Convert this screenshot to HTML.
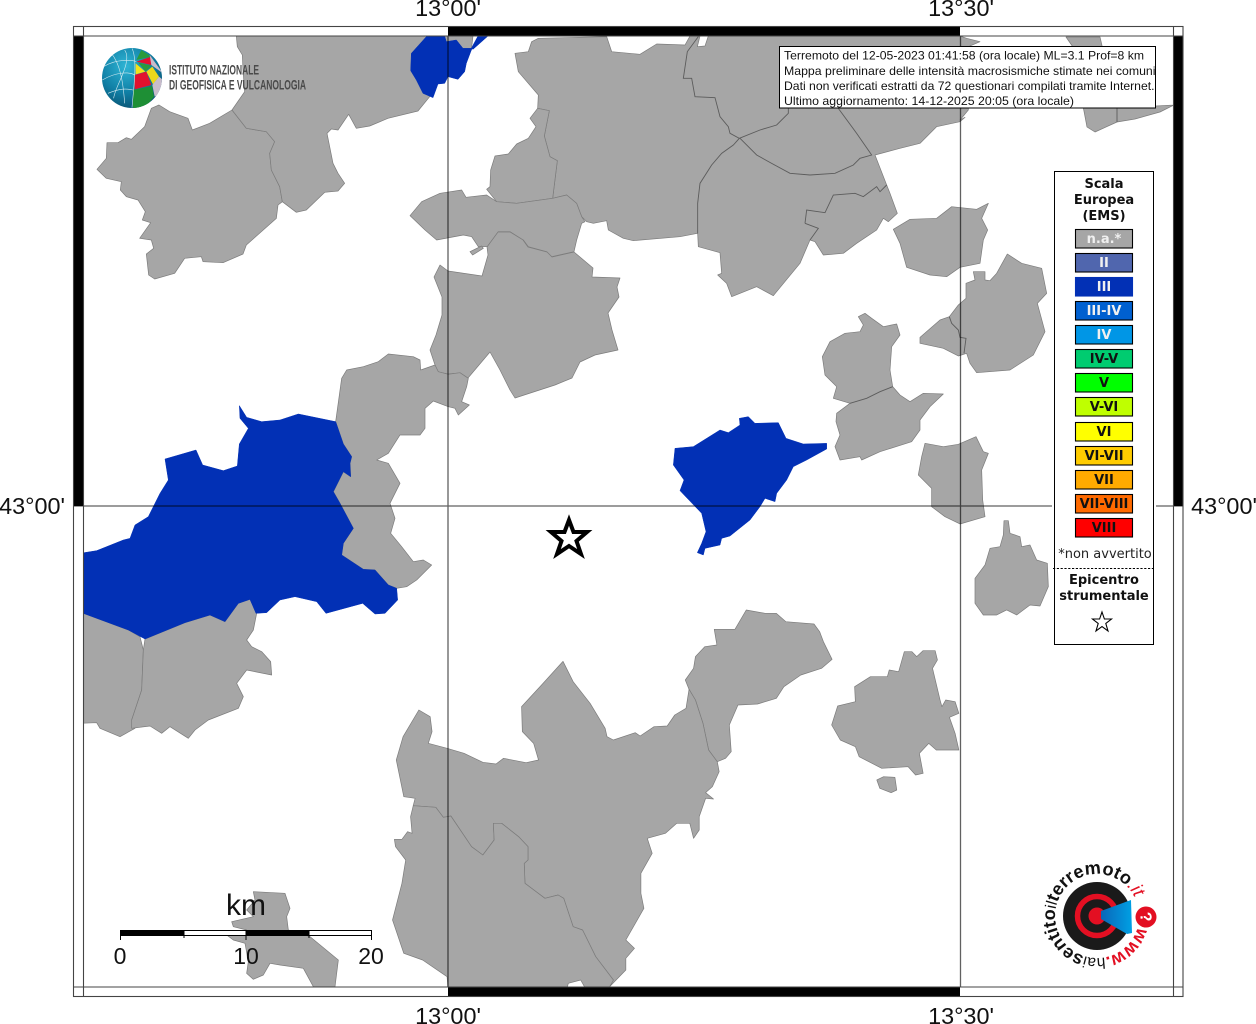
<!DOCTYPE html>
<html><head><meta charset="utf-8"><title>Mappa intensità macrosismiche</title>
<style>
html,body{margin:0;padding:0;background:#fff;width:1256px;height:1024px;overflow:hidden}
svg{display:block;font-family:"Liberation Sans",sans-serif}
.g polygon{fill:#a6a6a6;stroke:#7c7c7c;stroke-width:.7;vector-effect:non-scaling-stroke;stroke-linejoin:round}
.b polygon{fill:#0230b5;stroke:#0230b5;stroke-width:.5;vector-effect:non-scaling-stroke}
.g polyline{fill:none;stroke:#5c5c5c;stroke-width:.9;vector-effect:non-scaling-stroke}
.ax{font-size:23.4px;fill:#111;text-anchor:middle}
.lg{font-family:"DejaVu Sans",sans-serif;font-size:13px;text-anchor:middle}
.bt{font-family:"DejaVu Sans",sans-serif;font-size:13px;font-weight:bold;text-anchor:middle}
.sb{font-size:23px;fill:#111;text-anchor:middle}
.hd{font-size:12px;fill:#111}
</style></head><body>
<svg width="1256" height="1024" viewBox="0 0 1256 1024" xmlns="http://www.w3.org/2000/svg">
<defs>
<clipPath id="m"><rect x="83" y="36" width="1090" height="951"/></clipPath>
<clipPath id="globe"><circle cx="132" cy="78" r="30"/></clipPath>
<clipPath id="hbox"><rect x="780" y="47" width="375" height="61"/></clipPath>
<radialGradient id="gb" cx=".4" cy=".3" r=".8"><stop offset="0" stop-color="#2fb5d5"/><stop offset=".55" stop-color="#107fa5"/><stop offset="1" stop-color="#094a68"/></radialGradient>
<linearGradient id="cone" x1="0" x2="1" y1="0" y2="0"><stop offset="0" stop-color="#0a66b8"/><stop offset="1" stop-color="#00a0e4"/></linearGradient>
</defs>

<g clip-path="url(#m)">
<g class="g">
<g transform="translate(83,30) scale(.33333)">
<polygon points="228,225 205,235 185,290 145,328 130,323 105,338 72,338 70,385 42,418 70,445 115,455 112,480 130,500 165,510 187,545 178,570 203,578 170,625 205,630 212,655 190,672 197,735 215,747 275,730 305,685 355,680 360,695 420,698 480,672 490,645 580,565 585,525 598,515 590,470 565,420 560,370 575,335 550,305 490,295 447,240 380,280 328,300 315,265 260,245"/>
<polygon points="460,18 463,50 478,75 480,120 485,185 447,240 490,295 550,305 575,335 560,370 565,420 590,470 598,515 640,547 670,540 725,487 765,483 785,460 765,430 750,400 740,350 732,310 745,297 765,300 797,253 820,295 860,288 915,265 1005,243 1040,200 1070,150 1165,60 1170,18"/>
</g>
<g transform="translate(400,30) scale(.33333)">
<polygon points="345,70 385,65 395,35 415,25 620,20 635,65 720,73 770,42 855,45 870,18 900,18 892,50 915,48 925,18 1680,18 1700,25 1740,35 1705,50 1705,240 1680,270 1695,262 1680,275 1610,290 1560,340 1500,355 1425,375 1460,465 1470,490 1492,550 1465,575 1450,565 1430,600 1370,640 1330,670 1270,675 1245,635 1230,630 1200,700 1120,797 1070,770 995,800 980,760 953,735 965,730 960,668 895,650 893,610 840,620 700,632 670,625 625,600 620,572 580,580 560,575 545,560 530,520 500,495 458,505 472,392 450,380 433,318 448,242 413,235 415,195 355,125"/>
<polygon points="260,478 270,470 272,420 285,378 325,372 350,342 385,325 408,290 390,265 413,235 448,242 433,318 450,380 472,392 458,505 350,520 290,515"/>
<polygon points="30,557 65,515 120,490 185,480 198,502 260,495 290,515 350,520 458,505 500,495 530,520 545,560 555,575 545,580 530,630 522,665 455,680 440,665 385,650 370,630 330,605 295,605 262,650 235,650 215,620 190,615 110,630 75,600"/>
<polygon points="210,665 245,648 250,655 218,675"/>
<polyline points="895,20 862,65 850,145 875,145 885,200 945,203 960,260 985,290 990,310 1018,325 1000,345 965,370 935,405 900,460 893,520 893,610"/>
<polyline points="1018,325 1080,300 1130,285 1165,250 1165,235"/>
<polyline points="1020,325 1070,375 1115,400 1170,430 1230,435 1305,430 1360,405 1380,385 1415,375 1370,310 1315,235"/>
<polyline points="1215,580 1220,540 1275,548 1300,495 1365,490 1390,500 1430,470 1440,485 1460,465"/>
<polyline points="1215,580 1255,595 1230,630"/>
</g>
<polygon points="440,265 448,271 482,276 488,255 487,247 498,232 510,232 523,240 528,247 547,252 552,257 574,252 593,268 592,277 620,278 617,287 619,297 608,313 612,330 618,350 595,355 580,362 572,378 555,385 515,398 510,390 500,370 490,352 468,378 460,373 448,374 438,372 435,365 430,350 436,335 442,315 442,297 434,277"/>
<g transform="translate(80,340) scale(.33333)">
<polygon points="1065,75 1075,95 1105,103 1140,98 1165,115 1160,140 1145,185 1168,195 1135,225 1125,205 1105,200 1060,183 1035,205 1035,265 1020,285 960,285 925,340 890,360 925,370 960,430 930,490 945,535 932,580 965,620 1000,665 1030,660 1055,675 1010,720 980,740 950,745 925,735 885,690 850,688 785,645 790,610 820,565 780,490 760,455 790,395 812,410 810,370 815,350 790,312 767,245 785,115 800,90 850,80 895,65 925,42 1000,50 1020,60 1022,90"/>
<polygon points="10,820 145,870 180,890 190,930 185,1050 155,1140 165,1165 120,1190 60,1165 50,1148 0,1150 0,820"/>
<polygon points="195,897 315,848 390,825 435,845 475,790 510,778 530,820 520,870 500,900 515,920 545,935 572,965 575,1005 500,990 470,1030 490,1070 475,1105 385,1140 345,1170 325,1195 270,1160 245,1180 210,1158 155,1165 155,1140 185,1050 190,930"/>
</g>
<g transform="translate(690,30) scale(.33333)">
<polygon points="610,598 660,568 740,565 785,530 860,538 895,520 875,565 893,600 880,630 870,700 810,712 770,740 720,735 650,712 630,640"/>
</g>
<g transform="translate(660,250) scale(.33333)">
<polygon points="1042,12 1085,40 1145,55 1160,130 1132,160 1155,245 1120,315 1050,360 950,368 930,340 920,310 895,318 850,295 780,280 780,262 840,210 868,200 895,165 918,145 918,100 945,90 940,65 975,65 975,90 990,92 1010,70"/>
<polyline points="868,200 875,220 895,240 900,262 918,265 912,310"/>
<polygon points="595,200 615,190 635,205 670,230 710,222 720,255 695,290 690,360 698,410 720,435 750,455 790,430 850,432 810,470 780,510 780,540 755,575 660,605 605,630 600,620 540,630 525,590 540,555 528,515 530,490 570,460 520,445 530,410 495,375 487,320 510,275 555,250 600,245 610,225"/>
<polyline points="570,460 620,445 660,425 698,410"/>
<polygon points="795,580 850,590 895,583 948,560 970,605 985,610 965,660 968,750 975,800 900,822 855,800 815,770 815,715 775,675 785,620"/>
<polygon points="1032,812 1045,812 1050,850 1080,860 1085,890 1110,885 1130,930 1162,940 1165,1010 1140,1068 1110,1065 1070,1095 1040,1080 1010,1095 970,1095 945,1060 945,985 975,945 990,895 1020,890 1030,855"/>
</g>
<g transform="translate(385,600) scale(.3763,.33333)">
<polygon points="808,268 798,240 820,205 825,170 850,140 882,135 875,88 930,88 960,30 1010,40 1040,40 1065,65 1140,72 1155,95 1165,125 1188,178 1160,205 1105,225 1060,260 1040,295 990,312 938,315 915,375 920,455 905,475 883,485 860,450 845,370 825,300"/>
<polygon points="473,184 500,245 545,310 585,385 590,410 607,420 665,398 678,408 715,380 750,378 770,345 800,325 808,268 825,300 845,370 860,450 883,485 888,515 870,560 852,578 873,597 852,595 835,650 835,690 820,715 810,670 775,670 745,700 697,715 710,760 680,820 680,880 688,925 640,1020 663,1045 640,1075 640,1110 597,1160 607,1140 560,1070 525,990 500,980 475,895 460,885 425,895 372,850 370,790 380,780 380,740 355,710 310,670 288,670 290,720 260,765 230,740 175,648 155,652 135,622 75,617 80,595 50,590 30,480 48,410 90,330 120,350 125,395 115,430 165,445 210,460 260,487 295,492 315,475 375,488 408,480 395,430 365,395 363,320 420,250"/>
<polygon points="75,617 135,622 155,652 175,648 230,740 260,765 290,720 288,670 310,670 355,710 380,740 380,780 370,790 372,850 425,895 460,885 475,895 500,980 525,990 560,1070 607,1140 597,1160 530,1160 520,1140 487,1150 485,1160 167,1160 165,1130 100,1080 50,1060 20,960 45,850 55,780 28,740 25,718 45,718 60,695 72,700 68,650"/>
<polygon points="1380,155 1400,155 1413,170 1430,152 1462,152 1468,180 1455,205 1475,300 1480,320 1490,300 1515,305 1525,340 1500,352 1515,400 1525,450 1465,450 1445,430 1420,460 1430,520 1410,525 1390,500 1320,505 1260,470 1250,440 1210,420 1187,375 1203,318 1250,305 1248,260 1290,230 1335,230 1340,210 1365,215"/>
<polygon points="1307,540 1325,530 1355,532 1360,570 1345,578 1315,565"/>
</g>
<polygon points="1066,37 1100,37 1103,50 1075,50"/>
<polygon points="1083,106 1087,127 1095,132 1117,122 1135,119 1160,112 1174,105 1156,106"/>
<polyline points="1117,108 1117,122"/>
<g transform="translate(70,880) scale(.33333)">
<polygon points="550,35 645,40 660,85 650,110 655,150 720,170 805,240 795,320 730,320 700,265 630,255 600,250 580,285 550,298 530,280 535,245 525,190 490,180 470,165 530,150 490,140 485,125 550,110 530,90 555,60"/>
</g>
</g>
<g class="b">
<g transform="translate(83,30) scale(.33333)">
<polygon points="1030,20 1085,18 1090,35 1120,30 1140,55 1167,55 1150,100 1145,125 1125,148 1095,140 1085,160 1065,162 1050,203 1020,190 1000,150 983,122 985,70"/>
<polygon points="1165,55 1185,18 1215,18 1170,58"/>
</g>
<g transform="translate(80,340) scale(.33333)">
<polygon points="0,640 50,632 130,600 150,595 165,555 205,530 225,490 240,460 265,420 255,357 348,330 368,375 430,392 472,378 478,312 505,265 480,235 478,197 500,232 545,245 600,240 655,222 767,245 790,312 815,350 810,370 812,410 790,395 760,455 780,490 820,565 790,610 785,645 850,688 885,690 925,735 950,745 953,780 915,820 885,822 848,790 738,820 710,785 645,770 600,780 560,818 528,820 510,778 475,790 435,845 390,825 315,848 195,897 145,870 10,820 0,815"/>
</g>
<g transform="translate(660,250) scale(.33333)">
<polygon points="45,595 100,590 180,540 205,548 240,525 238,505 265,500 285,520 355,518 378,565 430,582 500,580 500,597 440,630 400,650 380,690 350,730 345,755 315,745 300,770 270,810 210,858 185,865 180,885 135,895 130,915 112,908 125,880 138,845 125,790 60,722 72,690 40,645"/>
</g>
</g>
</g>

<!-- grid -->
<g stroke="#000" stroke-opacity=".62" stroke-width="1.3" fill="none">
<path d="M448 36V987M960.5 36V987M73 506H1183"/>
</g>

<!-- frame -->
<g fill="#000">
<rect x="448" y="26" width="512" height="10"/>
<rect x="448" y="987" width="512" height="10"/>
<rect x="73" y="36" width="10" height="470"/>
<rect x="1173" y="36" width="10" height="470"/>
</g>
<g fill="none" stroke="#444" stroke-width="1.1">
<rect x="73.5" y="26.5" width="1109.5" height="970"/>
<path d="M83.5 26V997M1173.5 26V997M73 36H1183M73 987H1183"/>
</g>

<!-- axis labels -->
<g class="ax">
<text x="448" y="16">13°00'</text>
<text x="961" y="16">13°30'</text>
<text x="448" y="1024">13°00'</text>
<text x="961" y="1024">13°30'</text>
<text x="32" y="514">43°00'</text>
<text x="1224" y="514">43°00'</text>
</g>

<!-- INGV logo -->
<circle cx="132" cy="78" r="30" fill="url(#gb)"/>
<g clip-path="url(#globe)">
<g transform="translate(83,30) scale(.33333)">
<polygon points="160,90 175,60 205,80" fill="#2a9a3c"/>
<polygon points="160,95 205,80 205,105" fill="#e2112e"/>
<polygon points="200,75 240,130 205,105" fill="#c9bccb"/>
<polygon points="158,100 187,125 158,133" fill="#f3e21a"/>
<polygon points="165,97 205,107 188,125" fill="#2a9a3c"/>
<polygon points="190,125 208,110 228,140 210,163" fill="#ecd81c"/>
<polygon points="155,135 190,125 205,165 155,178" fill="#e2112e"/>
<polygon points="228,140 240,150 240,185 215,200 208,165" fill="#c9bccb"/>
<polygon points="150,180 207,168 213,200 180,240 150,240" fill="#1e8f35"/>
<g fill="none" stroke="#d5eaf0" stroke-width="1.8">
<path d="M147 55C165 90 150 190 147 233"/>
<path d="M125 60C150 95 95 170 92 205"/>
<path d="M62 110C100 85 150 90 160 95"/>
<path d="M58 150C100 125 140 125 155 135"/>
<path d="M75 190C110 175 130 175 150 180"/>
<path d="M85 70C110 100 120 150 125 220"/>
</g>
</g>
</g>
<text x="169" y="74.5" font-size="13.5" font-weight="bold" fill="#4a4a4a" textLength="90" lengthAdjust="spacingAndGlyphs">ISTITUTO NAZIONALE</text>
<text x="169" y="89.5" font-size="13.5" font-weight="bold" fill="#4a4a4a" textLength="137" lengthAdjust="spacingAndGlyphs">DI GEOFISICA E VULCANOLOGIA</text>

<!-- info box -->
<rect x="779.5" y="46.5" width="376" height="61.5" fill="#fff" stroke="#000" stroke-width="1"/>
<g clip-path="url(#hbox)" class="hd">
<text x="784" y="59.5" textLength="360" lengthAdjust="spacingAndGlyphs">Terremoto del 12-05-2023 01:41:58 (ora locale) ML=3.1 Prof=8 km</text>
<text x="784" y="75" textLength="371.5" lengthAdjust="spacingAndGlyphs">Mappa preliminare delle intensità macrosismiche stimate nei comuni</text>
<text x="784" y="90" textLength="370.5" lengthAdjust="spacingAndGlyphs">Dati non verificati estratti da 72 questionari compilati tramite Internet.</text>
<text x="784" y="105" textLength="290" lengthAdjust="spacingAndGlyphs">Ultimo aggiornamento: 14-12-2025 20:05 (ora locale)</text>
</g>

<!-- legend -->
<rect x="1052" y="169" width="104" height="477" fill="#fff"/>
<rect x="1054.5" y="171.5" width="99" height="473" fill="#fff" stroke="#000" stroke-width="1"/>
<g class="bt" fill="#111">
<text x="1104" y="188">Scala</text>
<text x="1104" y="204">Europea</text>
<text x="1104" y="220">(EMS)</text>
</g>
<g stroke="#000" stroke-width="1.1">
<rect x="1075.5" y="229.5" width="57" height="18.5" fill="#a6a6a6"/>
<rect x="1075.5" y="253.5" width="57" height="18.5" fill="#5066ae"/>
<rect x="1075.5" y="277.5" width="57" height="18.5" fill="#0230b5" stroke="#0230b5"/>
<rect x="1075.5" y="301.5" width="57" height="18.5" fill="#0060d0"/>
<rect x="1075.5" y="325.5" width="57" height="18.5" fill="#0096e6"/>
<rect x="1075.5" y="349.5" width="57" height="18.5" fill="#00cc70"/>
<rect x="1075.5" y="373.5" width="57" height="18.5" fill="#00ff00"/>
<rect x="1075.5" y="397.5" width="57" height="18.5" fill="#bfff00"/>
<rect x="1075.5" y="422.5" width="57" height="18.5" fill="#ffff00"/>
<rect x="1075.5" y="446.5" width="57" height="18.5" fill="#ffcc00"/>
<rect x="1075.5" y="470.5" width="57" height="18.5" fill="#ffaa00"/>
<rect x="1075.5" y="494.5" width="57" height="18.5" fill="#ff6a00"/>
<rect x="1075.5" y="518.5" width="57" height="18.5" fill="#ff0000"/>
</g>
<g class="bt" fill="#f0f0f0">
<text x="1104" y="243">n.a.*</text>
<text x="1104" y="267">II</text>
<text x="1104" y="291">III</text>
<text x="1104" y="315">III-IV</text>
<text x="1104" y="339">IV</text>
</g>
<g class="bt" fill="#111">
<text x="1104" y="363">IV-V</text>
<text x="1104" y="387">V</text>
<text x="1104" y="411">V-VI</text>
<text x="1104" y="436">VI</text>
<text x="1104" y="460">VI-VII</text>
<text x="1104" y="484">VII</text>
<text x="1104" y="508">VII-VIII</text>
<text x="1104" y="532">VIII</text>
</g>
<text class="lg" x="1105" y="558" fill="#222">*non avvertito</text>
<path d="M1053 568.5H1153" stroke="#000" stroke-width="1" stroke-dasharray="2.2 1.6"/>
<g class="bt" fill="#111">
<text x="1104" y="584">Epicentro</text>
<text x="1104" y="600">strumentale</text>
</g>
<polygon points="1102,612 1104.4,619 1111.5,619 1105.8,623.5 1108,631 1102,626.5 1096,631 1098.2,623.5 1092.5,619 1099.6,619" fill="#fff" stroke="#000" stroke-width="1.1"/>

<!-- epicentre star -->
<polygon points="569,520 573.5,532 587,532 576.5,541 581,554 569,546 557,554 561.5,541 551,532 564.5,532" fill="#fff" stroke="#000" stroke-width="4" stroke-linejoin="miter"/>

<!-- scale bar -->
<g>
<rect x="120.5" y="930.5" width="251" height="5" fill="#fff" stroke="#000" stroke-width="1"/>
<rect x="120" y="930" width="64" height="6" fill="#000"/>
<rect x="246" y="930" width="63" height="6" fill="#000"/>
<path d="M120.5 930V940M246 930V940M371.5 930V940M184 930V938M309 930V938" stroke="#000" stroke-width="1"/>
<text x="246" y="915" font-size="30" fill="#111" text-anchor="middle">km</text>
<text class="sb" x="120" y="964">0</text>
<text class="sb" x="246" y="964">10</text>
<text class="sb" x="371" y="964">20</text>
</g>

<!-- hai sentito logo -->
<circle cx="1097" cy="916" r="34" fill="#1a1a1a"/>
<circle cx="1097" cy="916" r="19.5" fill="none" stroke="#e30f22" stroke-width="5.5"/>
<circle cx="1097" cy="916" r="8.5" fill="#e30f22"/>
<polygon points="1101,911 1131,900 1132,933 1127,934 1101,919" fill="url(#cone)"/>
<circle cx="1146" cy="917" r="10.5" fill="#e30f22"/>
<text x="0" y="0" transform="translate(1146,917) rotate(80)" dy="5.5" text-anchor="middle" font-size="16" font-weight="bold" fill="#fff">?</text>
<path id="ring" d="M1137.6 926.9A42 42 0 1 1 1136 900.3" fill="none"/>
<text font-size="18.2" fill="#111"><textPath href="#ring" startOffset="0"><tspan fill="#e30f22" font-weight="bold">www.</tspan><tspan font-size="15.5">hai</tspan><tspan font-weight="bold">sentito</tspan><tspan font-size="15.5">il</tspan><tspan font-weight="bold">terremoto</tspan><tspan fill="#e30f22" font-style="italic">.it</tspan></textPath></text>
</svg>
</body></html>
